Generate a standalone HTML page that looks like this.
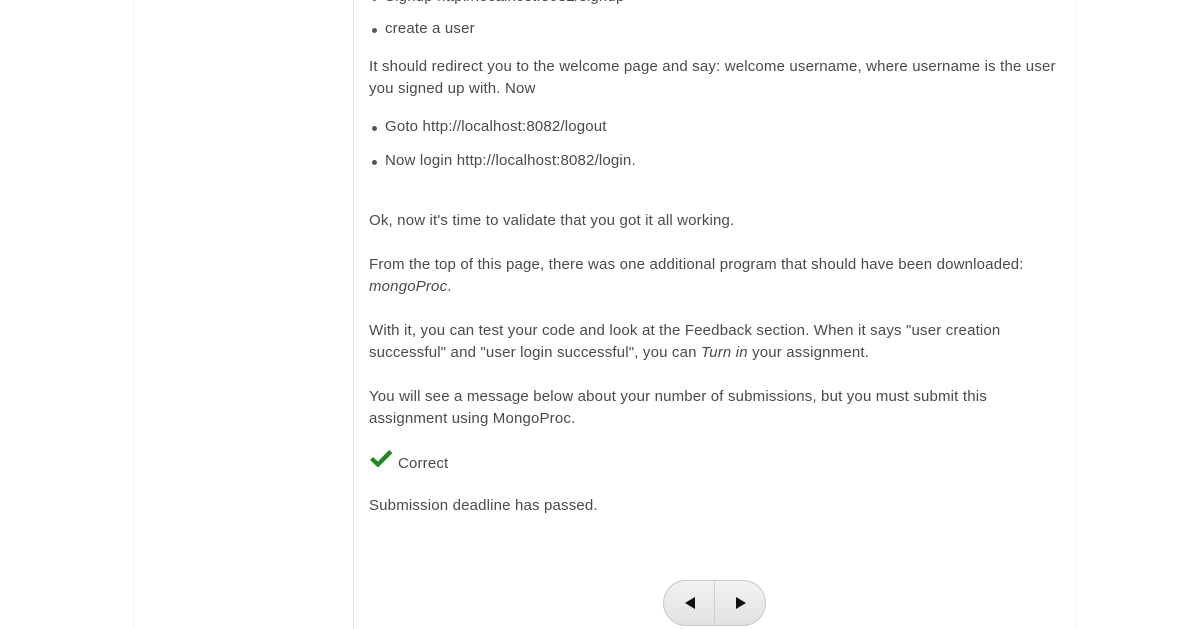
<!DOCTYPE html>
<html><head><meta charset="utf-8"><style>
html,body{margin:0;padding:0;width:1203px;height:629px;overflow:hidden;background:#fff;font-family:"Liberation Sans",sans-serif;font-size:15px;color:#4a4a4a;letter-spacing:0.17px;}
.l{position:absolute;left:369px;white-space:nowrap;line-height:22px;}
.b{position:absolute;left:385px;white-space:nowrap;line-height:22px;}
.b:before{content:"";position:absolute;left:-13px;top:10px;width:5px;height:5px;border-radius:50%;background:#555;}
.v{position:absolute;top:0;bottom:0;width:1px;}
</style></head><body>
<div class="v" style="left:133px;background:#f5f5f5"></div>
<div class="v" style="left:353px;background:#e4e4e4"></div>
<div class="v" style="left:1075px;background:#f7f7f7"></div>
<div class="b" style="top:-14px">Signup http://localhost:8082/signup</div>
<div class="b" style="top:18px">create a user</div>
<div class="l" style="top:56px">It should redirect you to the welcome page and say: welcome username, where username is the user</div>
<div class="l" style="top:78px">you signed up with. Now</div>
<div class="b" style="top:116px">Goto http://localhost:8082/logout</div>
<div class="b" style="top:150px">Now login http://localhost:8082/login.</div>
<div class="l" style="top:210px">Ok, now it's time to validate that you got it all working.</div>
<div class="l" style="top:254px">From the top of this page, there was one additional program that should have been downloaded:</div>
<div class="l" style="top:276px"><i>mongoProc</i>.</div>
<div class="l" style="top:320px">With it, you can test your code and look at the Feedback section. When it says "user creation</div>
<div class="l" style="top:342px">successful" and "user login successful", you can <i>Turn in</i> your assignment.</div>
<div class="l" style="top:386px">You will see a message below about your number of submissions, but you must submit this</div>
<div class="l" style="top:408px">assignment using MongoProc.</div>
<svg style="position:absolute;left:369px;top:449px" width="24" height="20" viewBox="0 0 24 20"><path d="M1 11 L4 8 L9 12.5 L20 1 L23.5 4 L9 18.5 Z" fill="#1e8a1e"/></svg>
<div class="l" style="top:453px;left:398px">Correct</div>
<div class="l" style="top:495px">Submission deadline has passed.</div>
<div style="position:absolute;left:663px;top:580px;width:101px;height:44px;border:1px solid #c8c8c8;border-radius:23px;background:linear-gradient(#f2f2f2,#e2e2e2);overflow:hidden">
<div style="position:absolute;left:50px;top:0;bottom:0;width:1px;background:#cfcfcf"></div>
<svg style="position:absolute;left:20px;top:16px" width="12" height="12"><path d="M11 0 L11 12 L1 6 Z" fill="#111"/></svg>
<svg style="position:absolute;left:71px;top:16px" width="12" height="12"><path d="M1 0 L1 12 L11 6 Z" fill="#111"/></svg>
</div>
</body></html>
